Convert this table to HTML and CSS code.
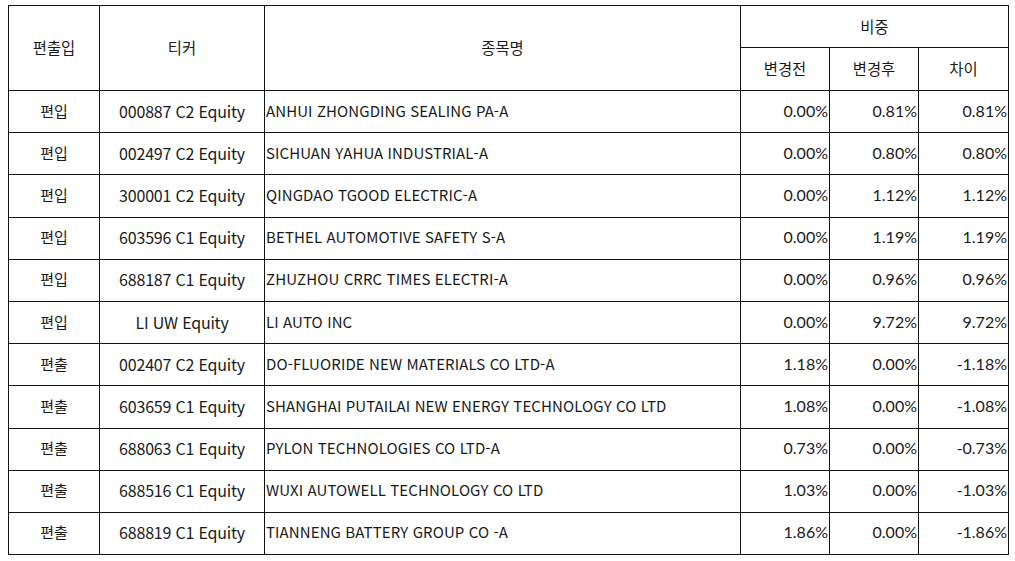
FILE: index.html
```html
<!DOCTYPE html>
<html lang="ko">
<head>
<meta charset="utf-8">
<link rel="stylesheet" href="styles.css">
</head>
<body>
<table class="tbl">
  <colgroup>
    <col class="c1"><col class="c2"><col class="c3"><col class="c4"><col class="c5"><col class="c6">
  </colgroup>
  <thead>
    <tr class="h1">
      <th rowspan="2">편출입</th>
      <th rowspan="2">티커</th>
      <th rowspan="2">종목명</th>
      <th colspan="3">비중</th>
    </tr>
    <tr class="h2">
      <th>변경전</th>
      <th>변경후</th>
      <th>차이</th>
    </tr>
  </thead>
  <tbody>
    <tr><td class="ctr">편입</td><td class="tk">000887 C2 Equity</td><td class="name">ANHUI ZHONGDING SEALING PA-A</td><td class="num">0.00%</td><td class="num">0.81%</td><td class="num">0.81%</td></tr>
    <tr><td class="ctr">편입</td><td class="tk">002497 C2 Equity</td><td class="name">SICHUAN YAHUA INDUSTRIAL-A</td><td class="num">0.00%</td><td class="num">0.80%</td><td class="num">0.80%</td></tr>
    <tr><td class="ctr">편입</td><td class="tk">300001 C2 Equity</td><td class="name">QINGDAO TGOOD ELECTRIC-A</td><td class="num">0.00%</td><td class="num">1.12%</td><td class="num">1.12%</td></tr>
    <tr><td class="ctr">편입</td><td class="tk">603596 C1 Equity</td><td class="name">BETHEL AUTOMOTIVE SAFETY S-A</td><td class="num">0.00%</td><td class="num">1.19%</td><td class="num">1.19%</td></tr>
    <tr><td class="ctr">편입</td><td class="tk">688187 C1 Equity</td><td class="name">ZHUZHOU CRRC TIMES ELECTRI-A</td><td class="num">0.00%</td><td class="num">0.96%</td><td class="num">0.96%</td></tr>
    <tr><td class="ctr">편입</td><td class="tk">LI UW Equity</td><td class="name">LI AUTO INC</td><td class="num">0.00%</td><td class="num">9.72%</td><td class="num">9.72%</td></tr>
    <tr><td class="ctr">편출</td><td class="tk">002407 C2 Equity</td><td class="name">DO-FLUORIDE NEW MATERIALS CO LTD-A</td><td class="num">1.18%</td><td class="num">0.00%</td><td class="num">-1.18%</td></tr>
    <tr><td class="ctr">편출</td><td class="tk">603659 C1 Equity</td><td class="name">SHANGHAI PUTAILAI NEW ENERGY TECHNOLOGY CO LTD</td><td class="num">1.08%</td><td class="num">0.00%</td><td class="num">-1.08%</td></tr>
    <tr><td class="ctr">편출</td><td class="tk">688063 C1 Equity</td><td class="name">PYLON TECHNOLOGIES CO LTD-A</td><td class="num">0.73%</td><td class="num">0.00%</td><td class="num">-0.73%</td></tr>
    <tr><td class="ctr">편출</td><td class="tk">688516 C1 Equity</td><td class="name">WUXI AUTOWELL TECHNOLOGY CO LTD</td><td class="num">1.03%</td><td class="num">0.00%</td><td class="num">-1.03%</td></tr>
    <tr><td class="ctr">편출</td><td class="tk">688819 C1 Equity</td><td class="name">TIANNENG BATTERY GROUP CO -A</td><td class="num">1.86%</td><td class="num">0.00%</td><td class="num">-1.86%</td></tr>
  </tbody>
</table>
</body>
</html>
```

FILE: styles.css
```css
html, body {
  margin: 0;
  padding: 0;
  background: #ffffff;
}
body {
  padding: 5px 0 0 8px;
  font-family: "Noto Sans CJK KR", "Noto Sans", sans-serif;
  font-size: 15px;
  color: #1a1a1a;
}
.tbl {
  border-collapse: collapse;
  table-layout: fixed;
  width: 1000px;
}
.c1 { width: 91px; }
.c2 { width: 165px; }
.c3 { width: 476px; }
.c4 { width: 89px; }
.c5 { width: 89px; }
.c6 { width: 90px; }
.tbl th, .tbl td {
  border: 1px solid #111111;
  padding: 0 1px 2px 1px;
  font-weight: 400;
  white-space: nowrap;
  overflow: hidden;
  line-height: 20px;
}
.tbl th { font-size: 15.4px; }
.h1 th { height: 39px; }
.h2 th { height: 40px; }
.tbl td { height: 39.2px; }
.ctr { text-align: center; }
.tk { text-align: center; font-size: 16px; letter-spacing: -0.2px; padding-bottom: 3px; }
.tbl td.tk { height: 38.2px; }
.name { text-align: left; letter-spacing: 0.1px; }
.num {
  text-align: right;
  font-family: "Lato", "Noto Sans CJK KR", sans-serif;
  font-size: 16px;
}
```
